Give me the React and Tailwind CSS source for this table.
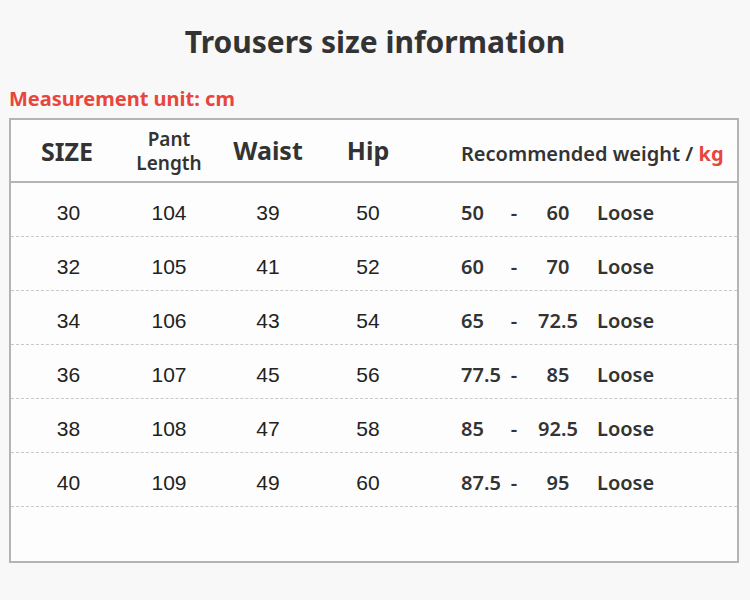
export default function App() {
  const rows = [
    ["30", "104", "39", "50", "50", "60"],
    ["32", "105", "41", "52", "60", "70"],
    ["34", "106", "43", "54", "65", "72.5"],
    ["36", "107", "45", "56", "77.5", "85"],
    ["38", "108", "47", "58", "85", "92.5"],
    ["40", "109", "49", "60", "87.5", "95"],
  ];
  const noto = { fontFamily: '"Noto Sans", "Open Sans", sans-serif' };
  return (
    <div className="w-[750px] h-[600px] bg-[#f8f8f8] overflow-hidden" style={noto}>
      <div className="pt-[20px] h-[84px] text-center text-[30px] font-bold text-[#333] leading-[44px]">
        Trousers size information
      </div>
      <div className="pl-[9px] h-[34px] text-[20px] font-bold text-[#e8463c] leading-[30px]">
        Measurement unit: cm
      </div>
      <div className="ml-[9px] w-[730px] h-[445px] border-2 border-[#b4b4b4] bg-[#fdfdfd] flex flex-col">
        <div className="h-[63px] border-b-2 border-[#b4b4b4] grid grid-cols-[115px_86px_112px_88px_1fr] items-center text-[#333] font-bold">
          <div className="text-center text-[25px] leading-none pt-[1px] pr-[3px]">SIZE</div>
          <div className="flex flex-col items-center text-[19px] font-semibold">
            <span className="leading-[24px]">Pant</span>
            <span className="leading-[24px]">Length</span>
          </div>
          <div className="text-center text-[25px] leading-none">Waist</div>
          <div className="text-center text-[25px] leading-none">Hip</div>
          <div className="pl-[49px] text-[20px] font-semibold pt-[6px] whitespace-nowrap">
            Recommended weight / <span className="text-[#e8463c] font-bold">kg</span>
          </div>
        </div>
        {rows.map((r, i) => (
          <div
            key={i}
            className="h-[54px] border-b border-dashed border-[#c8c8c8] grid grid-cols-[115px_86px_112px_88px_1fr] items-center pt-[6px]"
          >
            {r.slice(0, 4).map((c, j) => (
              <div
                key={j}
                className="text-center text-[21px] text-[#222]"
                style={{ fontFamily: '"Liberation Sans", Arial, sans-serif' }}
              >
                {c}
              </div>
            ))}
            <div className="pl-[49px] flex items-center text-[20px] font-semibold text-[#333]">
              <span className="w-[48px]">{r[4]}</span>
              <span className="w-[10px] text-center">-</span>
              <span className="w-[78px] text-center">{r[5]}</span>
              <span>Loose</span>
            </div>
          </div>
        ))}
      </div>
    </div>
  );
}
